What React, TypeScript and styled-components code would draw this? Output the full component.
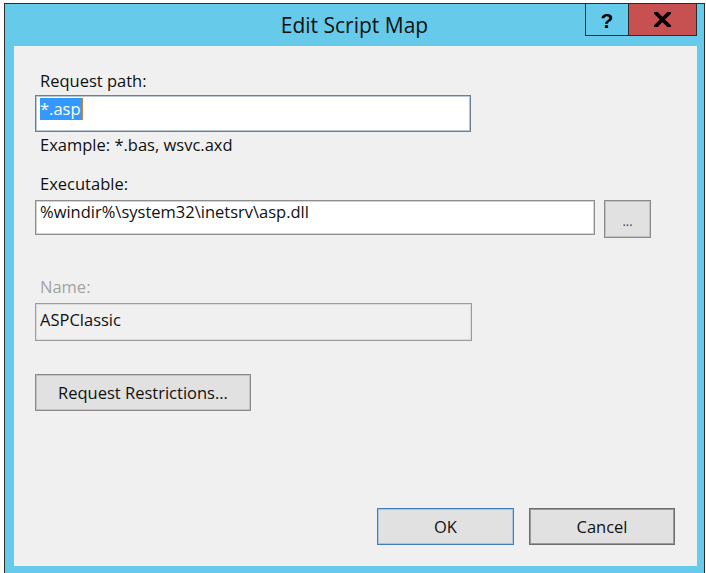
import React from "react";
import styled, { createGlobalStyle } from "styled-components";

const GlobalStyle = createGlobalStyle`
  html, body {
    margin: 0;
    padding: 0;
    background: #ffffff;
    overflow: hidden;
  }
  body {
    font-family: "Open Sans", "Liberation Sans", Arial, sans-serif;
    color: #111111;
  }
  * {
    box-sizing: border-box;
  }
`;

const Window = styled.div`
  margin: 3px 0 0 4px;
  width: 701px;
  height: 575px;
  background: #66cbea;
  border: 1px solid #2b2b2b;
  display: flex;
  flex-direction: column;
`;

const TitleBar = styled.div`
  height: 42px;
  display: grid;
  grid-template-columns: 1fr auto 1fr;
  align-items: start;
`;

const Title = styled.div`
  grid-column: 2;
  font-size: 21px;
  line-height: 42px;
  color: #111111;
`;

const CaptionButtons = styled.div`
  grid-column: 3;
  justify-self: end;
  display: flex;
  margin-top: -1px;
  margin-right: 7px;
`;

const CaptionButton = styled.div<{ $width: number; $bg: string; $first?: boolean }>`
  width: ${(p) => p.$width}px;
  height: 33px;
  background: ${(p) => p.$bg};
  border: 1px solid #2b2b2b;
  border-left-width: ${(p) => (p.$first ? 1 : 0)}px;
  display: flex;
  align-items: center;
  justify-content: center;
  color: #000;
`;

const HelpGlyph = styled.span`
  font-family: "Liberation Sans", Arial, sans-serif;
  font-weight: bold;
  font-size: 21px;
  line-height: 1;
  margin-top: 1px;
`;

const Panel = styled.div`
  margin: 0 7px 0 9px;
  height: 520px;
  background: #f0f0f0;
  display: flex;
  flex-direction: column;
  padding: 25px 22px 21px 21px;
`;

const Label = styled.div<{ $mt?: number; $disabled?: boolean }>`
  margin: ${(p) => p.$mt ?? 0}px 0 0 5px;
  height: 20px;
  font-size: 16.5px;
  line-height: 20px;
  color: ${(p) => (p.$disabled ? "#a3a3a3" : "#111111")};
`;

const Field = styled.div<{
  $mt?: number;
  $width: number;
  $height: number;
  $pt: number;
  $focused?: boolean;
  $disabled?: boolean;
}>`
  margin-top: ${(p) => p.$mt ?? 0}px;
  width: ${(p) => p.$width}px;
  height: ${(p) => p.$height}px;
  padding: ${(p) => p.$pt}px 4px 0;
  font-size: 16.5px;
  line-height: 22px;
  white-space: nowrap;
  color: #111111;
  background: ${(p) => (p.$disabled ? "#f0f0f0" : "#ffffff")};
  border: 1px solid ${(p) => (p.$focused ? "#6a7f96" : p.$disabled ? "#9c9c9c" : "#8e8e8e")};
  box-shadow: inset 0 0 0 1px
    ${(p) => (p.$focused ? "#b9c6d4" : p.$disabled ? "#dcdcdc" : "#d2d2d2")};
`;

const Selection = styled.span`
  display: inline-block;
  background: #3399ff;
  color: #ffffff;
  border-right: 1px solid #d9822b;
  padding-right: 1px;
`;

const Row = styled.div<{ $mt?: number }>`
  margin-top: ${(p) => p.$mt ?? 0}px;
  display: flex;
  align-items: flex-start;
  gap: 9px;
`;

const Button = styled.div<{
  $mt?: number;
  $width: number;
  $height?: number;
  $variant?: "normal" | "default" | "focused";
}>`
  margin-top: ${(p) => p.$mt ?? 0}px;
  width: ${(p) => p.$width}px;
  height: ${(p) => p.$height ?? 37}px;
  display: flex;
  align-items: center;
  justify-content: center;
  font-size: 16.5px;
  color: #111111;
  background: #e1e1e1;
  border: 1px solid
    ${(p) =>
      p.$variant === "default" ? "#3f80b8" : p.$variant === "focused" ? "#6e6e6e" : "#8a8a8a"};
  box-shadow: inset 0 0 0 1px
    ${(p) =>
      p.$variant === "default" ? "#a9c7e2" : p.$variant === "focused" ? "#9a9a9a" : "#c2c2c2"};
`;

const Dots = styled.span`
  font-size: 13px;
  margin-top: 4px;
  color: #3a3a6a;
`;

const Footer = styled.div`
  margin-top: auto;
  display: flex;
  justify-content: flex-end;
  gap: 15px;
`;

const CloseIcon = () => (
  <svg width="17" height="15" viewBox="0 0 17 15">
    <path d="M2 1 L15 14 M15 1 L2 14" stroke="#000" strokeWidth="3.8" strokeLinecap="square" />
  </svg>
);

export default function App() {
  return (
    <>
      <GlobalStyle />
      <Window>
        <TitleBar>
          <Title>Edit Script Map</Title>
          <CaptionButtons>
            <CaptionButton $width={44} $bg="#66cbea" $first>
              <HelpGlyph>?</HelpGlyph>
            </CaptionButton>
            <CaptionButton $width={68} $bg="#c75050">
              <CloseIcon />
            </CaptionButton>
          </CaptionButtons>
        </TitleBar>
        <Panel>
          <Label>Request path:</Label>
          <Field $mt={4} $width={436} $height={37} $pt={2} $focused>
            <Selection>*.asp</Selection>
          </Field>
          <Label $mt={3}>Example: *.bas, wsvc.axd</Label>
          <Label $mt={19}>Executable:</Label>
          <Row $mt={6}>
            <Field $width={560} $height={35} $pt={0}>
              %windir%\system32\inetsrv\asp.dll
            </Field>
            <Button $width={47} $height={38}>
              <Dots>...</Dots>
            </Button>
          </Row>
          <Label $mt={39} $disabled>
            Name:
          </Label>
          <Field $mt={6} $width={437} $height={38} $pt={5} $disabled>
            ASPClassic
          </Field>
          <Button $mt={33} $width={216}>
            Request Restrictions...
          </Button>
          <Footer>
            <Button $width={137} $variant="default">
              OK
            </Button>
            <Button $width={146} $variant="focused">
              Cancel
            </Button>
          </Footer>
        </Panel>
      </Window>
    </>
  );
}
